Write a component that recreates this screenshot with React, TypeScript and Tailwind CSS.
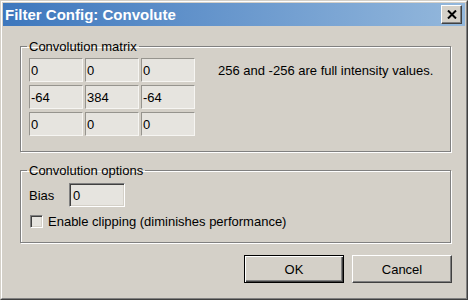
const cells = ["0", "0", "0", "-64", "384", "-64", "0", "0", "0"];

const raised =
  "border border-t-white border-l-white border-r-[#404040] border-b-[#404040] shadow-[inset_-1px_-1px_0_#808080] bg-[#d4d0c8]";
const sunken =
  "border border-t-[#808080] border-l-[#808080] border-r-white border-b-white shadow-[inset_1px_1px_0_#404040,inset_-1px_-1px_0_#d4d0c8] bg-[#e6e4df]";

export default function App() {
  return (
    <div className="w-[468px] h-[300px] bg-[#d4d0c8] border border-t-[#d4d0c8] border-l-[#d4d0c8] border-r-[#404040] border-b-[#404040] font-['Liberation_Sans',Arial,sans-serif] text-[13px] leading-[15px] text-black">
      <div className="h-full border border-t-white border-l-white border-r-[#808080] border-b-[#808080] p-[1px] flex flex-col">
        {/* title bar */}
        <div className="h-[23px] bg-gradient-to-r from-[#3d77bd] to-[#94b8dc] flex items-center justify-between pl-[2px] pr-[3px]">
          <span className="text-white font-bold text-[15px] leading-[17px]">Filter Config: Convolute</span>
          <div className={`w-[21px] h-[19px] flex items-center justify-center ${raised}`}>
            <svg width="10" height="9" viewBox="0 0 10 9">
              <path d="M1 0.5 L9 8.5 M9 0.5 L1 8.5" stroke="black" strokeWidth="2" />
            </svg>
          </div>
        </div>

        <div className="flex-1 pl-[17px] pt-[13px]">
          <fieldset className="w-[431px] h-[113px] border border-[#808080] shadow-[inset_1px_1px_0_#fff,1px_1px_0_#fff] p-0 m-0">
            <legend className="ml-[6px] px-[2px]">Convolution matrix</legend>
            <div className="flex items-start pl-[8px] pt-[4px]">
              <div className="grid grid-cols-[54px_54px_54px] gap-x-[2px] gap-y-[3px]">
                {cells.map((v, i) => (
                  <div
                    key={i}
                    className="h-[24px] flex items-center pl-[1px] bg-[#e6e4df] border border-t-[#96948e] border-l-[#96948e] border-r-[#f6f5f2] border-b-[#f6f5f2]"
                  >
                    {v}
                  </div>
                ))}
              </div>
              <div className="ml-[23px] mt-[5px]">256 and -256 are full intensity values.</div>
            </div>
          </fieldset>

          <fieldset className="w-[431px] h-[80px] mt-[11px] border border-[#808080] shadow-[inset_1px_1px_0_#fff,1px_1px_0_#fff] p-0 m-0">
            <legend className="ml-[6px] px-[2px]">Convolution options</legend>
            <div className="pl-[8px] pt-[5px] flex flex-col">
              <div className="flex items-center">
                <span className="w-[40px]">Bias</span>
                <div className={`w-[56px] h-[24px] flex items-center pl-[3px] ${sunken}`}>0</div>
              </div>
              <label className="flex items-center mt-[7px] ml-[1px]">
                <span className={`w-[13px] h-[13px] ${sunken}`} />
                <span className="ml-[5px]">Enable clipping (diminishes performance)</span>
              </label>
            </div>
          </fieldset>

          <div className="flex justify-end gap-[8px] mt-[12px] w-[432px]">
            <button className="w-[100px] h-[28px] border border-black shadow-[inset_1px_1px_0_#fff,inset_-1px_-1px_0_#404040,inset_-2px_-2px_0_#808080] bg-[#d4d0c8]">
              OK
            </button>
            <button className={`w-[100px] h-[28px] ${raised}`}>Cancel</button>
          </div>
        </div>
      </div>
    </div>
  );
}
